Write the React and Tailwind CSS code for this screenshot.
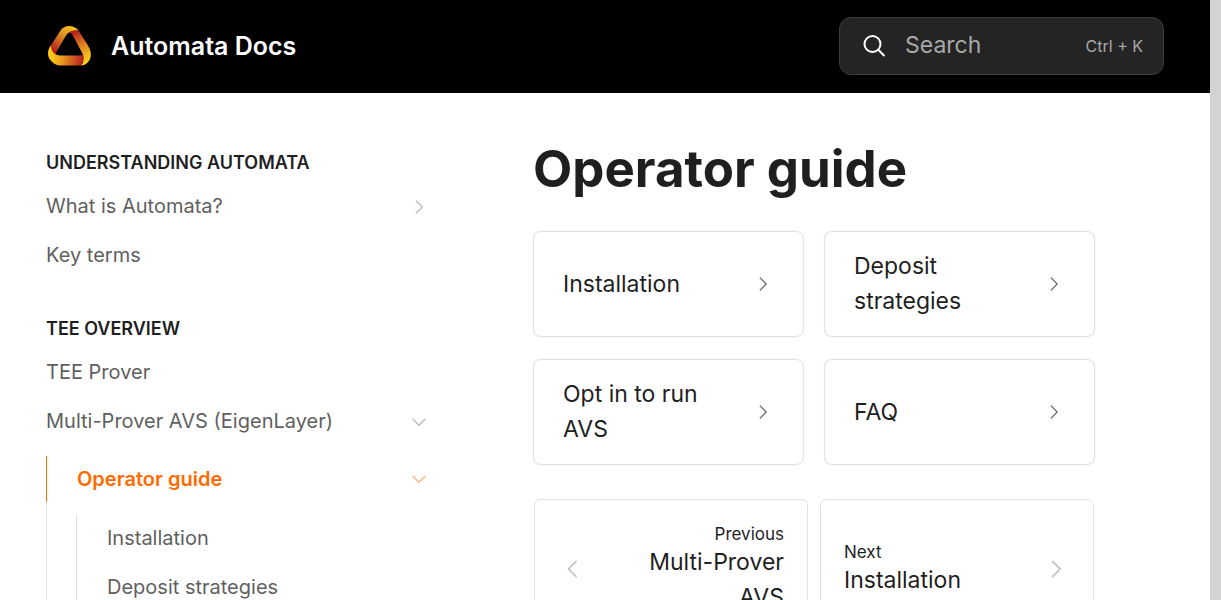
import React from "react";

function Logo() {
  return (
    <svg viewBox="0 0 43 40" className="h-10 w-[43px] shrink-0" aria-hidden="true">
      <defs>
        <linearGradient id="left" gradientUnits="userSpaceOnUse" x1="25" y1="0" x2="7" y2="27">
          <stop offset="0" stopColor="#fcc419" />
          <stop offset="0.35" stopColor="#e39a20" />
          <stop offset="1" stopColor="#b3181f" />
        </linearGradient>
        <linearGradient id="bottom" gradientUnits="userSpaceOnUse" x1="3" y1="30" x2="36" y2="35">
          <stop offset="0" stopColor="#fdcb17" />
          <stop offset="0.35" stopColor="#e8991f" />
          <stop offset="1" stopColor="#b3181f" />
        </linearGradient>
        <linearGradient id="right" gradientUnits="userSpaceOnUse" x1="25" y1="5" x2="39" y2="34">
          <stop offset="0" stopColor="#b3181f" />
          <stop offset="0.65" stopColor="#e8991f" />
          <stop offset="1" stopColor="#fdcb17" />
        </linearGradient>
      </defs>
      <path fill="url(#left)" d="M8 29 Q7.500 27 9 25 L18 9.500 Q21.500 4 30.500 4.500 Q27 0 21 0 Q15.500 0 12.500 4.500 L2.500 20 Q2 28 8 29Z" />
      <path fill="url(#bottom)" d="M2.800 19.500 C-1 25 -.5 30 2 33.500 Q6 39.500 13 39.500 L33 39.500 Q36.500 35.500 34.800 28 Q34.500 29.500 31.500 29.500 L12 29.500 Q3.500 29 2.800 19.500Z" />
      <path fill="url(#right)" d="M19 8.500 Q22.500 3.800 30.500 4.500 L40 19.500 C44 26 43.500 31.500 40.500 35.500 Q37.500 39.500 33 39.500 Q36.800 35.500 35 28.500 L24.500 9 Q22 5 19 8.500Z" />
    </svg>
  );
}

function Chevron({ dir = "right", className = "" }) {
  const paths = { right: "M9 5.500 L15.500 12 L9 18.500", left: "M15.500 5.500 L9 12 L15.500 18.500", down: "M5.500 9 L12 15.500 L18.500 9" };
  return (
    <svg viewBox="0 0 24 24" fill="none" stroke="currentColor" strokeLinecap="round" strokeLinejoin="round" className={"shrink-0 " + className} aria-hidden="true">
      <path d={paths[dir]} />
    </svg>
  );
}

function NavItem({ label, dir }) {
  return (
    <li>
      <a href="#" className="flex items-center justify-between gap-3 py-2.5 leading-[29px] text-[#5f5f5f]">
        {label}
        {dir && <Chevron dir={dir} className="-mr-1 size-[22px] stroke-[1.5] text-[#bdbdbd]" />}
      </a>
    </li>
  );
}

function NavHeading({ children }) {
  return <h2 className="text-lg leading-[26px] font-semibold text-[#1f1f1f]">{children}</h2>;
}

function Card({ label }) {
  return (
    <a href="#" className="flex min-h-[106px] items-center justify-between gap-4 rounded-lg border border-[#e2e2e2] px-[29px] shadow-[0_0_1px_#d8d8d8]">
      <span className="max-w-[150px]">{label}</span>
      <Chevron className="size-[22px] stroke-[1.5] text-[#757575]" />
    </a>
  );
}

export default function App() {
  return (
    <div className="flex h-screen overflow-hidden bg-white font-['Inter','Liberation_Sans',sans-serif] text-[#1f1f1f]">
      <div className="min-w-0 flex-1">
        <header className="flex h-[93px] items-center justify-between bg-black px-[46px] pb-0.5">
          <a href="#" className="flex items-center gap-5 pl-0.5 text-[25px] leading-9 font-semibold text-white">
            <Logo />
            Automata Docs
          </a>
          <button type="button" className="flex h-[58px] w-[325px] items-center rounded-xl border border-[#3d3d3d] bg-[#242424] px-5 text-left text-[#a9a9a9]">
            <svg viewBox="0 0 28 28" fill="none" className="size-7 shrink-0 stroke-white stroke-2" aria-hidden="true">
              <circle cx="12.500" cy="12" r="8" />
              <path d="M18.200 17.700 L24.500 24" />
            </svg>
            <span className="ml-[17px] flex-1 text-[23px]">Search</span>
            <kbd className="font-['Inter',sans-serif] text-base">Ctrl + K</kbd>
          </button>
        </header>

        <div className="flex px-[46px]">
          <nav aria-label="Documentation" className="w-[380px] shrink-0 pt-[57px] text-xl">
            <NavHeading>UNDERSTANDING AUTOMATA</NavHeading>
            <ul className="mt-1.5">
              <NavItem label="What is Automata?" dir="right" />
              <NavItem label="Key terms" />
            </ul>
            <div className="mt-9">
              <NavHeading>TEE OVERVIEW</NavHeading>
              <ul className="mt-1.5">
                <NavItem label="TEE Prover" />
                <NavItem label="Multi-Prover AVS (EigenLayer)" dir="down" />
                <li className="mt-2.5 border-l border-[#e2e2e2]">
                  <a href="#" aria-current="page" className="-ml-px flex h-[46px] items-center justify-between border-l border-[#ff6b00] pl-[30px] font-semibold text-[#ff6b00]">
                    Operator guide
                    <Chevron dir="down" className="-mr-1 size-[22px] stroke-[1.5] text-[#ffb580]" />
                  </a>
                  <ul className="mt-3 ml-[29px] border-l border-[#e2e2e2] pl-[30px]">
                    <NavItem label="Installation" />
                    <NavItem label="Deposit strategies" />
                  </ul>
                </li>
              </ul>
            </div>
          </nav>

          <main className="ml-[107px] max-w-[562px] flex-1 text-[23px] leading-[35px]">
            <h1 className="mt-11 text-[51px] leading-[64px] font-bold">Operator guide</h1>
            <div className="mt-[30px] grid grid-cols-2 gap-x-5 gap-y-[22px]">
              <Card label="Installation" />
              <Card label="Deposit strategies" />
              <Card label="Opt in to run AVS" />
              <Card label="FAQ" />
            </div>
            <div className="mt-[34px] grid grid-cols-2 gap-3 px-px">
              <a href="#" className="flex min-h-[140px] items-center justify-between rounded-md border border-[#e2e2e2] px-[23px]">
                <Chevron dir="left" className="size-7 stroke-[1.5] text-[#c2c2c2]" />
                <span className="flex max-w-[150px] flex-col text-right">
                  <span className="text-[17px] leading-[22px]">Previous</span>
                  <span>Multi-Prover AVS</span>
                </span>
              </a>
              <a href="#" className="flex min-h-[140px] items-center justify-between rounded-md border border-[#e2e2e2] px-[23px]">
                <span className="flex flex-col">
                  <span className="text-[17px] leading-[22px]">Next</span>
                  <span>Installation</span>
                </span>
                <Chevron className="size-7 stroke-[1.5] text-[#c2c2c2]" />
              </a>
            </div>
          </main>
        </div>
      </div>
      <div className="w-[11px] shrink-0 bg-[#d3d3d3]" aria-hidden="true" />
    </div>
  );
}
